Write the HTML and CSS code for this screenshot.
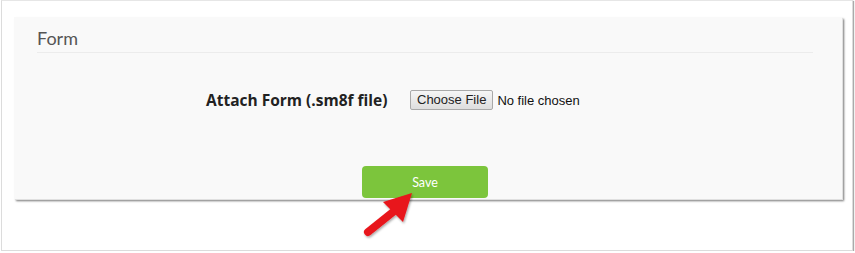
FILE: index.html
```html
<!DOCTYPE html>
<html lang="en">
<head>
    <meta charset="UTF-8">
    <meta name="viewport" content="width=device-width, initial-scale=1.0">
    <title>Form</title>
    <link rel="stylesheet" href="styles.css">
</head>
<body>
    <div class="frame">
        <div class="panel">
            <h2 class="panel-title">Form</h2>
            <div class="form-row">
                <label class="form-label" for="archivo">Attach Form (.sm8f file)</label>
                <div class="file-field">
                    <span class="file-button">Choose File</span>
                    <span class="file-name">No file chosen</span>
                    <input type="file" id="archivo" class="file-input">
                </div>
            </div>
            <div class="actions">
                <button type="submit" class="save">Save</button>
            </div>
        </div>
        <svg class="arrow" width="70" height="60" viewBox="0 0 70 60">
            <defs>
                <filter id="sombra" x="-20%" y="-20%" width="150%" height="150%">
                    <feDropShadow dx="1" dy="1.5" stdDeviation="1" flood-color="#000" flood-opacity="0.35"/>
                </filter>
            </defs>
            <g filter="url(#sombra)">
                <line x1="15" y1="48" x2="40" y2="28" stroke="#e8141b" stroke-width="8" stroke-linecap="round"/>
                <polygon points="30,18 59,9 50,38" fill="#e8141b"/>
            </g>
        </svg>
    </div>
</body>
</html>
```
FILE: styles.css
```css
body {
    margin: 0;
    background: #fff;
    font-family: "Open Sans", Arial, sans-serif;
}
.frame {
    position: relative;
    width: 852px;
    height: 251px;
    margin-left: 1px;
    border: 1px solid #dcdcdc;
    border-top-color: #e6e6e6;
    box-shadow: 1px 1px 1px #aaa;
    box-sizing: border-box;
}
.panel {
    margin: 16px 10px 0 12px;
    height: 182px;
    background: #f9f9f9;
    box-shadow: 1px 1px 0 #e0e0e0, 2px 2px 2px #777;
    padding: 0 29px 0 23px;
    box-sizing: border-box;
    display: flex;
    flex-direction: column;
}
.panel-title {
    margin: 0;
    padding: 10px 0 3px 0;
    font-family: Lato, "Open Sans", sans-serif;
    font-weight: 400;
    font-size: 18px;
    line-height: 22px;
    color: #555;
    border-bottom: 1px solid #ececec;
}
.form-row {
    display: flex;
    align-items: center;
    margin-top: 36px;
    padding-left: 169px;
}
.form-label {
    font-weight: 700;
    font-size: 15.5px;
    color: #222;
    width: 204px;
}
.file-field {
    position: relative;
    display: flex;
    align-items: center;
    font-family: Arial, "Liberation Sans", sans-serif;
    font-size: 13px;
    color: #111;
}
.file-button {
    display: inline-block;
    height: 18px;
    line-height: 18px;
    padding: 0 6px;
    border: 1px solid #a9a9a9;
    border-radius: 2px;
    background: linear-gradient(#f6f6f6, #dedede);
    color: #222;
}
.file-name {
    margin-left: 4px;
}
.file-input {
    display: none;
}
.actions {
    display: flex;
    justify-content: center;
    margin-top: 55px;
}
.save {
    width: 126px;
    height: 32px;
    border: none;
    border-radius: 4px;
    background: #7cc53c;
    color: #fff;
    font-family: Lato, "Open Sans", sans-serif;
    font-size: 12.5px;
    cursor: pointer;
}
.arrow {
    position: absolute;
    left: 351px;
    top: 183px;
}
```
